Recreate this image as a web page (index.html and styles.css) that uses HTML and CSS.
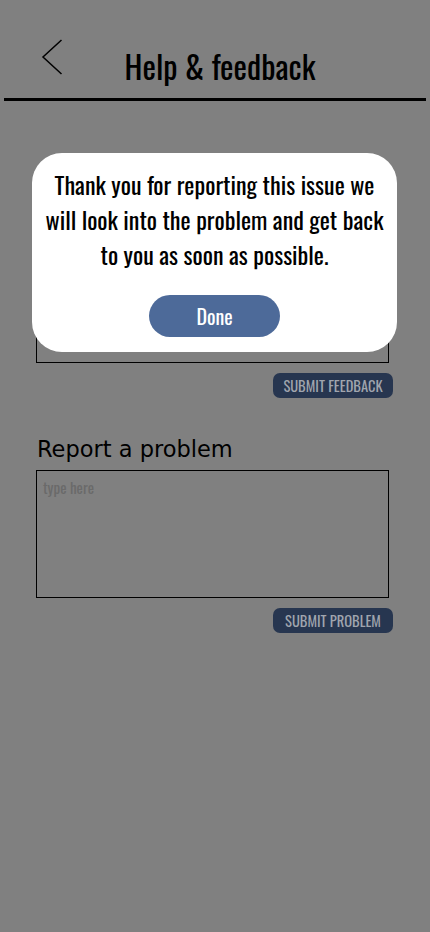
FILE: index.html
```html
<!DOCTYPE html>
<html lang="en">
<head>
<meta charset="utf-8">
<title>Help &amp; feedback</title>
<link rel="stylesheet" href="styles.css">
</head>
<body>
<div class="page">
  <header class="header">
    <button class="back" aria-label="Back">
      <svg width="22" height="36" viewBox="0 0 22 36"><polyline points="20.5,1 2,18 20.5,35" fill="none" stroke="#000" stroke-width="1.5"/></svg>
    </button>
    <h1 class="title">Help &amp; feedback</h1>
  </header>
  <main class="content">
    <section class="block first">
      <h2 class="label">Give feedback</h2>
      <div class="box"><span class="ph">type here</span></div>
      <div class="actions"><button class="submit">SUBMIT FEEDBACK</button></div>
    </section>
    <section class="block">
      <h2 class="label">Report a problem</h2>
      <div class="box"><span class="ph">type here</span></div>
      <div class="actions"><button class="submit">SUBMIT PROBLEM</button></div>
    </section>
  </main>
</div>
<div class="modal">
  <p class="msg">Thank you for reporting this issue we will look into the problem and get back to you as soon as possible.</p>
  <button class="done">Done</button>
</div>
</body>
</html>
```
FILE: styles.css
```css
html, body {
  margin: 0;
  padding: 0;
}
body {
  width: 430px;
  height: 932px;
  background: #808080;
  font-family: "Oswald", "Liberation Sans Narrow", "DejaVu Sans Condensed", "Liberation Sans", sans-serif;
  overflow: hidden;
  position: relative;
}
.page {
  display: flex;
  flex-direction: column;
}
.header {
  margin: 0 4px;
  height: 98px;
  border-bottom: 3px solid #000;
  display: flex;
  align-items: flex-end;
  position: relative;
}
.back {
  position: absolute;
  left: 37px;
  top: 39px;
  background: none;
  border: 0;
  padding: 0;
}
.back svg { display: block; }
.title {
  margin: 0 0 12px 0;
  width: 100%;
  text-align: center;
  font-weight: 400;
  font-size: 32px;
  line-height: 40px;
  padding-left: 10px;
  font-stretch: condensed;
}
.content {
  padding: 0 41px 0 36px;
  display: flex;
  flex-direction: column;
}
.block {
  display: flex;
  flex-direction: column;
}
.block.first { margin-top: 98px; }
.block + .block { margin-top: 36px; }
.label {
  margin: 0 0 6px 1px;
  font-family: "DejaVu Sans", sans-serif;
  font-weight: 400;
  font-size: 22.5px;
  line-height: 30px;
  color: #000;
}
.box {
  box-sizing: border-box;
  height: 128px;
  border: 1px solid #000;
  padding: 4px 6px;
}
.ph {
  color: #6a6a6a;
  font-weight: 400;
  font-size: 15px;
  line-height: 20px;
  font-stretch: condensed;
}
.actions {
  display: flex;
  justify-content: flex-end;
  margin-top: 10px;
  margin-right: -4px;
}
.submit {
  background: #273650;
  color: #a0a5ae;
  border: 0;
  border-radius: 7px;
  height: 25px;
  width: 120px;
  padding: 0;
  font-family: inherit;
  font-weight: 400;
  font-size: 14.5px;
  font-stretch: condensed;
}
.modal {
  position: absolute;
  left: 32px;
  top: 153px;
  width: 365px;
  height: 199px;
  box-sizing: border-box;
  background: #fff;
  border-radius: 30px;
  display: flex;
  flex-direction: column;
  align-items: center;
  padding: 14px 0 0;
}
.msg {
  margin: 0;
  width: 346px;
  text-align: center;
  font-size: 24px;
  line-height: 35px;
  color: #000;
  font-stretch: condensed;
}
.done {
  margin-top: 23px;
  width: 131px;
  height: 42px;
  border: 0;
  border-radius: 21px;
  background: #4d6a99;
  color: #fff;
  font-family: inherit;
  font-size: 20px;
  font-stretch: condensed;
  padding: 0;
}
```
